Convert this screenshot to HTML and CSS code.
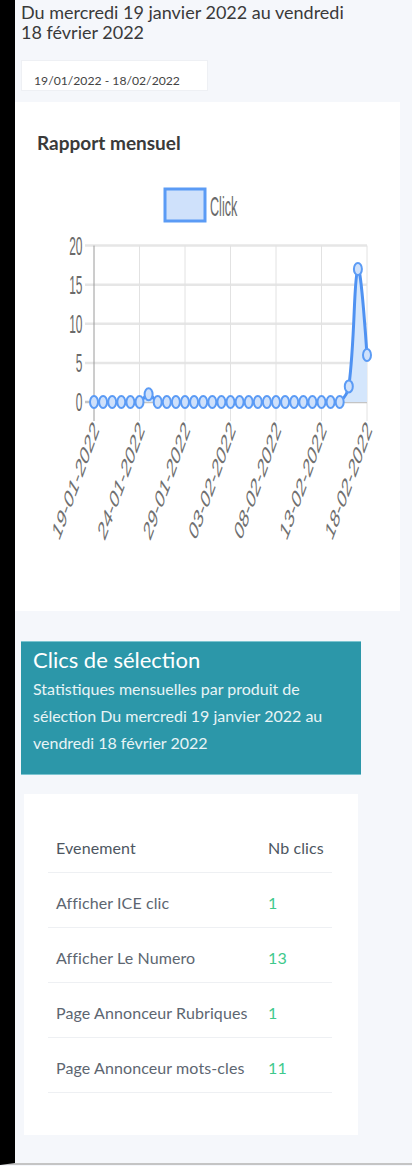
FILE: index.html
```html
<!DOCTYPE html>
<html lang="fr">
<head>
<meta charset="utf-8">
<title>Rapport mensuel</title>
<link rel="stylesheet" href="styles.css">
</head>
<body>
<div class="page">
  <h1 class="period">Du mercredi 19 janvier 2022 au vendredi 18 février 2022</h1>
  <div class="range">19/01/2022 - 18/02/2022</div>

  <section class="card">
    <h2 class="card-title">Rapport mensuel</h2>
    <svg class="chart" viewBox="15 160 385 451" width="385" height="451">
      <rect class="leg-box" x="165" y="189" width="40" height="32"/>
      <g transform="translate(210,206) scale(0.45,1)"><text class="leg-text">Click</text></g>

      <line class="grid-h" x1="85" x2="367" y1="245.6" y2="245.6"/>
      <line class="grid-h" x1="85" x2="367" y1="284.7" y2="284.7"/>
      <line class="grid-h" x1="85" x2="367" y1="323.8" y2="323.8"/>
      <line class="grid-h" x1="85" x2="367" y1="362.9" y2="362.9"/>

      <line class="grid-v" x1="139.5" x2="139.5" y1="245.6" y2="421"/>
      <line class="grid-v" x1="185" x2="185" y1="245.6" y2="421"/>
      <line class="grid-v" x1="230.5" x2="230.5" y1="245.6" y2="421"/>
      <line class="grid-v" x1="276" x2="276" y1="245.6" y2="421"/>
      <line class="grid-v" x1="321.5" x2="321.5" y1="245.6" y2="421"/>
      <line class="grid-v" x1="367" x2="367" y1="245.6" y2="421"/>
      <line class="grid-zero" x1="85" x2="367" y1="402" y2="402"/>
      <line class="axis" x1="94" x2="94" y1="245.6" y2="421"/>

      <g transform="translate(82.5,245.6) scale(0.46,1)"><text class="ytick">20</text></g>
      <g transform="translate(82.5,284.7) scale(0.46,1)"><text class="ytick">15</text></g>
      <g transform="translate(82.5,323.8) scale(0.46,1)"><text class="ytick">10</text></g>
      <g transform="translate(82.5,362.9) scale(0.46,1)"><text class="ytick">5</text></g>
      <g transform="translate(82.5,402) scale(0.46,1)"><text class="ytick">0</text></g>

      <path class="area" d="M94,402 L139.5,402 C143.6,400.2 145,394.2 148.6,394.2 C152.2,394.2 153.6,400.2 157.7,402 C160.8,403.3 163,402 166.8,402 L339.7,402 C344.5,397.9 347.8,393.5 348.8,386.4 C355.1,340.3 353.7,276.2 357.9,269 C361,263.7 367,355 367,355 L367,402 Z"/>
      <path class="line" d="M94,402 L139.5,402 C143.6,400.2 145,394.2 148.6,394.2 C152.2,394.2 153.6,400.2 157.7,402 C160.8,403.3 163,402 166.8,402 L339.7,402 C344.5,397.9 347.8,393.5 348.8,386.4 C355.1,340.3 353.7,276.2 357.9,269 C361,263.7 367,355 367,355"/>

      <g class="pts">
        <ellipse cx="94" cy="402" rx="4" ry="6"/>
        <ellipse cx="103.1" cy="402" rx="4" ry="6"/>
        <ellipse cx="112.2" cy="402" rx="4" ry="6"/>
        <ellipse cx="121.3" cy="402" rx="4" ry="6"/>
        <ellipse cx="130.4" cy="402" rx="4" ry="6"/>
        <ellipse cx="139.5" cy="402" rx="4" ry="6"/>
        <ellipse cx="148.6" cy="394.2" rx="4" ry="6"/>
        <ellipse cx="157.7" cy="402" rx="4" ry="6"/>
        <ellipse cx="166.8" cy="402" rx="4" ry="6"/>
        <ellipse cx="175.9" cy="402" rx="4" ry="6"/>
        <ellipse cx="185" cy="402" rx="4" ry="6"/>
        <ellipse cx="194.1" cy="402" rx="4" ry="6"/>
        <ellipse cx="203.2" cy="402" rx="4" ry="6"/>
        <ellipse cx="212.3" cy="402" rx="4" ry="6"/>
        <ellipse cx="221.4" cy="402" rx="4" ry="6"/>
        <ellipse cx="230.5" cy="402" rx="4" ry="6"/>
        <ellipse cx="239.6" cy="402" rx="4" ry="6"/>
        <ellipse cx="248.7" cy="402" rx="4" ry="6"/>
        <ellipse cx="257.8" cy="402" rx="4" ry="6"/>
        <ellipse cx="266.9" cy="402" rx="4" ry="6"/>
        <ellipse cx="276" cy="402" rx="4" ry="6"/>
        <ellipse cx="285.1" cy="402" rx="4" ry="6"/>
        <ellipse cx="294.2" cy="402" rx="4" ry="6"/>
        <ellipse cx="303.3" cy="402" rx="4" ry="6"/>
        <ellipse cx="312.4" cy="402" rx="4" ry="6"/>
        <ellipse cx="321.5" cy="402" rx="4" ry="6"/>
        <ellipse cx="330.6" cy="402" rx="4" ry="6"/>
        <ellipse cx="339.7" cy="402" rx="4" ry="6"/>
        <ellipse cx="348.8" cy="386.4" rx="4" ry="6"/>
        <ellipse cx="357.9" cy="269" rx="4" ry="6"/>
        <ellipse cx="367" cy="355" rx="4" ry="6"/>
      </g>

      <g transform="translate(96,425) scale(0.5,1) rotate(-54)"><text class="xtick">19-01-2022</text></g>
      <g transform="translate(141.5,425) scale(0.5,1) rotate(-54)"><text class="xtick">24-01-2022</text></g>
      <g transform="translate(187,425) scale(0.5,1) rotate(-54)"><text class="xtick">29-01-2022</text></g>
      <g transform="translate(232.5,425) scale(0.5,1) rotate(-54)"><text class="xtick">03-02-2022</text></g>
      <g transform="translate(278,425) scale(0.5,1) rotate(-54)"><text class="xtick">08-02-2022</text></g>
      <g transform="translate(323.5,425) scale(0.5,1) rotate(-54)"><text class="xtick">13-02-2022</text></g>
      <g transform="translate(369,425) scale(0.5,1) rotate(-54)"><text class="xtick">18-02-2022</text></g>
    </svg>
  </section>

  <section class="banner">
    <h3 class="banner-title">Clics de sélection</h3>
    <p class="banner-text">Statistiques mensuelles par produit de sélection Du mercredi 19 janvier 2022 au vendredi 18 février 2022</p>
  </section>

  <section class="table-card">
    <div class="tbl" role="table">
      <div class="tr th" role="row"><span role="columnheader">Evenement</span><span role="columnheader">Nb clics</span></div>
      <div class="tr" role="row"><span role="cell">Afficher ICE clic</span><span class="num" role="cell">1</span></div>
      <div class="tr" role="row"><span role="cell">Afficher Le Numero</span><span class="num" role="cell">13</span></div>
      <div class="tr" role="row"><span role="cell">Page Annonceur Rubriques</span><span class="num" role="cell">1</span></div>
      <div class="tr" role="row"><span role="cell">Page Annonceur mots-cles</span><span class="num" role="cell">11</span></div>
    </div>
  </section>
</div>
</body>
</html>
```
FILE: styles.css
```css
html, body {
  margin: 0;
  padding: 0;
  background: #f5f7fb;
}
body {
  font-family: "Lato", "Noto Sans", sans-serif;
}
.page {
  border-left: 15px solid #000;
  background: #f5f7fb;
  padding: 3px 0 28px 0;
  border-bottom: 2px solid #c4c4c4;
}
.period {
  margin: 0 0 0 6px;
  width: 340px;
  font-size: 18px;
  line-height: 19.5px;
  font-weight: 400;
  color: #3a3a3a;
}
.range {
  margin: 18px 0 0 6px;
  width: 187px;
  height: 31px;
  box-sizing: border-box;
  padding: 10px 0 0 12px;
  background: #fff;
  border: 1px solid #eef0f4;
  font-size: 12.2px;
  line-height: 20px;
  color: #444;
}
.card {
  margin-top: 11px;
  width: 385px;
  background: #fff;
}
.card-title {
  margin: 0;
  padding: 29px 0 5px 22px;
  font-size: 19px;
  line-height: 24px;
  font-weight: 700;
  color: #3a3a3a;
}
.chart {
  display: block;
}
.leg-box { fill: #cfe1fb; stroke: #5b9bf5; stroke-width: 3; }
.leg-text, .ytick, .xtick {
  font-family: "Liberation Sans", Arial, sans-serif;
  fill: #6a6a6a;
  dominant-baseline: central;
}
.leg-text { font-size: 28px; }
.ytick { font-size: 26px; text-anchor: end; }
.xtick { font-size: 27px; text-anchor: end; fill: #707070; }
.grid-h { stroke: #e6e6e6; stroke-width: 2.5; }
.grid-zero { stroke: #c4c4c4; stroke-width: 2.5; }
.grid-v { stroke: #e2e2e2; stroke-width: 1; }
.axis { stroke: #9a9a9a; stroke-width: 1; }
.area { fill: #d4e6fc; }
.line { fill: none; stroke: #4f92f2; stroke-width: 3; }
.pts ellipse { fill: #cfe1fb; stroke: #5b9bf5; stroke-width: 2; }

.banner {
  margin: 30px 0 0 6px;
  width: 340px;
  box-sizing: border-box;
  background: #2c97a9;
  border-top: 1px solid #7cc4d0;
  border-bottom: 1px solid #7cc4d0;
  padding: 5px 16px 18px 12px;
  color: #fff;
}
.banner-title {
  margin: 0;
  font-size: 22px;
  line-height: 26px;
  font-weight: 400;
}
.banner-text {
  margin: 2px 0 0 0;
  font-size: 16px;
  line-height: 27px;
  color: #e8f4f6;
}
.table-card {
  margin: 19px 0 0 9px;
  width: 334px;
  box-sizing: border-box;
  background: #fff;
  padding: 24px 24px 42px 24px;
}
.tbl {
  width: 284px;
}
.tr {
  display: grid;
  grid-template-columns: 212px 72px;
  align-items: center;
  height: 55px;
  box-sizing: border-box;
  padding-top: 4px;
  border-bottom: 1px solid #eef0f3;
  font-size: 16px;
  letter-spacing: 0.1px;
  color: #5d6671;
}
.tr span {
  padding-left: 8px;
}
.th {
  color: #4d5661;
}
.num {
  color: #3ec98c;
}
```
